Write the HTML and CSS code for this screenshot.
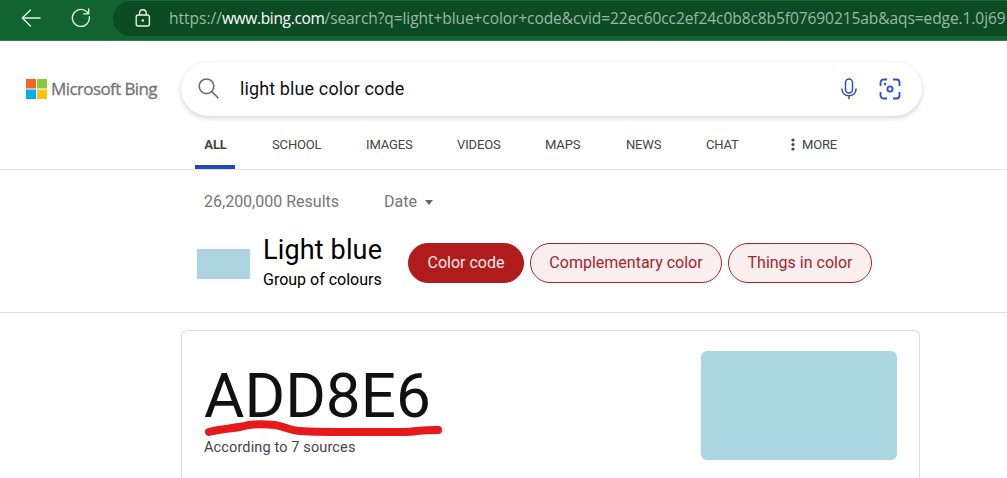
FILE: index.html
```html
<!DOCTYPE html>
<html lang="en">
<head>
<meta charset="utf-8">
<title>light blue color code - Search</title>
<link rel="stylesheet" href="styles.css">
</head>
<body>
<header class="toolbar">
  <svg class="back" width="20" height="18" viewBox="0 0 20 18"><path d="M19 9H1.5M9.5 1 1.3 9l8.2 8"/></svg>
  <svg class="reload" width="20" height="20" viewBox="0 0 20 20"><path d="M18.3 8.6A8.5 8.5 0 1 1 15.8 3.8L17.6 5.6M17.7 1v4.8h-5"/></svg>
  <div class="address">
    <svg class="lock" width="16" height="18" viewBox="0 0 16 18"><rect x="1.2" y="6" width="13.2" height="11" rx="2"/><path d="M4.6 6V4a3.3 3.3 0 0 1 6.6 0v2"/><circle cx="7.8" cy="11.5" r="1.2"/></svg>
    <span class="url">https://<b>www.bing.com</b><span class="query">/search?q=light+blue+color+code&amp;cvid=22ec60cc2ef24c0b8c8b5f07690215ab&amp;aqs=edge.1.0j69</span></span>
  </div>
</header>
<div class="search-row">
  <div class="brand">
    <svg width="21" height="20" viewBox="0 0 21 20"><path fill="#f26522" d="M0 0h10v9.5H0z"/><path fill="#8dc63f" d="M11 0h10v9.5H11z"/><path fill="#00aeef" d="M0 10.5h10V20H0z"/><path fill="#ffc20e" d="M11 10.5h10V20H11z"/></svg>
    <span class="brand-name">Microsoft Bing</span>
  </div>
  <div class="search-box">
    <svg class="glass" width="22" height="22" viewBox="0 0 22 22"><circle cx="8.5" cy="8.3" r="7.3"/><path d="m13.8 13.6 6.2 6.2"/></svg>
    <span class="search-text">light blue color code</span>
    <svg class="mic" width="16" height="22" viewBox="0 0 16 22"><rect x="4.500" y="1" width="7" height="14" rx="3.500"/><path d="M1 10.500v1a7 6.300 0 0 0 14 0v-1M8 18V21"/></svg>
    <svg class="lens" width="22" height="22" viewBox="0 0 22 22"><path d="M1.500 8V4.500a3 3 0 0 1 3-3H8M14 1.500h3.500a3 3 0 0 1 3 3V8M20.500 14v3.500a3 3 0 0 1-3 3H14M8 20.500H4.500a3 3 0 0 1-3-3V14"/><circle cx="11" cy="11" r="2.600"/><circle class="dot" cx="6" cy="6" r="1.200"/></svg>
  </div>
</div>
<nav class="tabs">
  <span class="tab active">ALL</span>
  <span class="tab school">SCHOOL</span>
  <span class="tab images">IMAGES</span>
  <span class="tab videos">VIDEOS</span>
  <span class="tab maps">MAPS</span>
  <span class="tab news">NEWS</span>
  <span class="tab chat">CHAT</span>
  <svg width="4" height="13" viewBox="0 0 4 13"><circle cx="2" cy="2" r="1.6"/><circle cx="2" cy="6.5" r="1.6"/><circle cx="2" cy="11" r="1.6"/></svg>
  <span class="tab more">MORE</span>
</nav>
<div class="meta">
  <span class="count">26,200,000 Results</span>
  <span class="date">Date</span>
  <span class="caret"></span>
</div>
<section class="entity">
  <div class="thumb"></div>
  <div class="entity-name">
    <h1>Light blue</h1>
    <p>Group of colours</p>
  </div>
  <div class="pills">
    <span class="pill selected">Color code</span>
    <span class="pill complementary">Complementary color</span>
    <span class="pill things">Things in color</span>
  </div>
</section>
<main class="answer">
  <div class="answer-text">
    <div class="code">ADD8E6</div>
    <svg class="stroke" width="240" height="18" viewBox="0 0 240 18"><path d="M5 12C15 9 28 8.500 38 6.500C48 3.500 62 4 71 5C81 6.500 86 10.500 96 11C115 12.500 155 12 200 12C212 11.500 222 9.500 234 10"/></svg>
    <div class="sources">According to 7 sources</div>
  </div>
  <div class="swatch"></div>
</main>
</body>
</html>
```
FILE: styles.css
```css
* { box-sizing: border-box; }
body { margin: 0; width: 1007px; height: 478px; overflow: hidden; background: #fff; font-family: Roboto, sans-serif; }
svg { display: block; flex: none; fill: none; }
span { white-space: nowrap; }
h1, p { margin: 0; font-weight: 400; }

.toolbar { display: flex; height: 41px; padding: 1px 0 0 21px; background: #11632f; border-bottom: 1px solid #387c50; overflow: hidden; }
.back, .reload, .lock { stroke: #e5f3e9; stroke-width: 1.35; stroke-linecap: round; stroke-linejoin: round; }
.back { margin-top: 8px; }
.reload { margin: 7px 0 0 30px; }
.address { display: flex; flex: none; width: 930px; height: 35px; margin-left: 22px; padding-left: 22px; border-radius: 18px; background: #0c4c25; }
.lock { margin-top: 8px; }
.lock circle { fill: #e5f3e9; stroke: none; }
.url { margin-left: 18px; line-height: 34px; font-family: "Open Sans", sans-serif; font-size: 15.5px; color: #9bb8a4; }
.url b { font-weight: 400; letter-spacing: -0.33px; color: #fff; }
.query { letter-spacing: -0.07px; }

.search-row { display: flex; height: 79px; padding: 21px 0 0 26px; }
.brand { display: flex; width: 155px; padding-top: 17px; }
.brand-name { margin-left: 4px; line-height: 20px; font-family: "Open Sans", sans-serif; font-size: 17px; font-weight: 500; letter-spacing: -0.6px; color: #737373; -webkit-text-stroke: 0.3px #737373; }
.search-box { display: flex; width: 741px; height: 54px; padding: 16px 21px 0 17px; border-radius: 27px; background: #fff; box-shadow: 0 2px 5px rgba(0,0,0,.17), 0 0 1px rgba(0,0,0,.08); }
.glass { stroke: #6c6c6c; stroke-width: 1.6; stroke-linecap: round; }
.search-text { flex: 1; margin: 0 0 0 20px; line-height: 22px; font-size: 18px; letter-spacing: 0.12px; color: #111; }
.mic { margin-right: 22px; stroke: #2850c8; stroke-width: 1.5; }
.lens { stroke: #2850c8; stroke-width: 1.8; }
.lens .dot { fill: #2850c8; stroke: none; }

.tabs { display: flex; height: 50px; padding-left: 195px; border-bottom: 1px solid #e5e5e5; font-size: 13px; letter-spacing: -0.15px; color: #444; }
.tab { line-height: 50px; flex: none; }
.active { width: 40px; padding-left: 1px; text-align: center; font-weight: 700; border-bottom: 4px solid #2048c0; }
.school { margin-left: 37px; width: 94px; }
.images { width: 91px; }
.videos { width: 88px; }
.maps { width: 81px; }
.news { width: 80px; }
.chat { width: 85px; }
.tabs svg { margin-top: 18px; fill: #444; }
.more { margin-left: 7px; }

.meta { display: flex; height: 63px; padding-left: 204px; line-height: 63px; font-size: 16px; color: #767676; }
.count { width: 180px; }
.caret { width: 0; height: 0; margin: 30px 0 0 8px; border: 4px solid transparent; border-top: 5px solid #666; border-bottom: 0; }

.entity { display: flex; height: 80px; padding-left: 197px; border-bottom: 1px solid #ddd; }
.thumb { width: 53px; height: 30px; margin-top: 16px; background: #add5e1; }
.entity-name { width: 145px; margin-left: 13px; color: #000; }
.entity-name h1 { padding-top: 1px; font-size: 27px; line-height: 33px; letter-spacing: 0.15px; }
.entity-name p { font-size: 16px; line-height: 20px; margin-top: 3px; }
.pills { display: flex; gap: 6px; margin-top: 10px; }
.pill { width: 116px; height: 40px; border: 1px solid #a4262c; border-radius: 20px; background: #fbeeee; color: #a4262c; font-size: 16px; line-height: 38px; text-align: center; }
.selected { border-color: #b01c1c; background: #b01c1c; color: #fbe9e9; }
.complementary { width: 192px; }
.things { width: 144px; }

.answer { display: flex; justify-content: space-between; width: 739px; height: 160px; margin: 17px 0 0 181px; padding: 20px 22px 0 22px; border: 1px solid #ddd; border-bottom: 0; border-radius: 6px 6px 0 0; }
.answer-text { position: relative; }
.code { margin-top: 9px; height: 72px; font-size: 62px; line-height: 72px; color: #111; }
.stroke { position: absolute; left: 0; top: 69px; stroke: #e8191c; stroke-width: 8; stroke-linecap: round; stroke-linejoin: round; }
.sources { margin-top: 5px; font-size: 14.5px; line-height: 22px; letter-spacing: 0.13px; color: #444; }
.swatch { width: 196px; height: 109px; border-radius: 6px; background: #add6e3; }
```
